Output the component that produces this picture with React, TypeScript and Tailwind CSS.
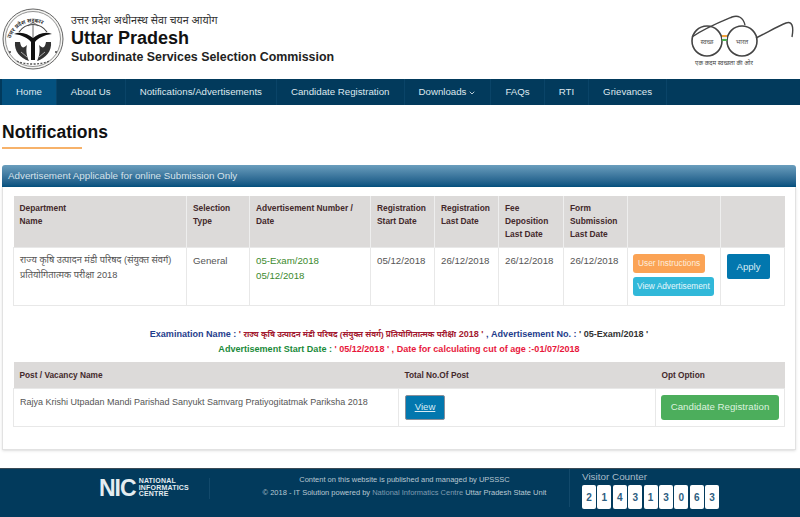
import React from "react";
import { ChevronDown } from "lucide-react";

const navItems = [
  { label: "Home", active: true },
  { label: "About Us" },
  { label: "Notifications/Advertisements" },
  { label: "Candidate Registration" },
  { label: "Downloads", caret: true },
  { label: "FAQs" },
  { label: "RTI" },
  { label: "Grievances" },
];

const counter = ["2", "1", "4", "3", "1", "3", "0", "6", "3"];

function StateEmblem() {
  return (
    <svg width="62" height="68" viewBox="0 0 62 68" className="shrink-0">
      <defs>
        <path id="emblemTop" d="M8 36 A23.5 23.5 0 0 1 54 36" />
      </defs>
      <circle cx="31" cy="34" r="30" fill="#f4f4f2" stroke="#666" strokeWidth="1" />
      <circle cx="31" cy="34" r="27.5" fill="#fff" stroke="#666" strokeWidth="0.7" />
      <text fontSize="5.6" fill="#333" fontWeight="700">
        <textPath href="#emblemTop" startOffset="4%">उत्तर प्रदेश सरकार</textPath>
      </text>
      <path d="M12 29 C20 30 26 33 29 37 L29 55 L33 55 L33 37 C36 33 42 30 50 29 C43 26 36 29 31 33 C26 29 19 26 12 29Z" fill="#111" />
      <path d="M17 27 C24 17 38 17 45 27" fill="none" stroke="#444" strokeWidth="1.2" />
      <path d="M31 17 L31 33 M26 21 L31 17 L36 21" fill="none" stroke="#555" strokeWidth="0.9" />
      <path d="M13 37 C12 46 18 53 27 56 C24 50 24 44 25 40 C21 44 19 43 18 37Z" fill="#333" />
      <path d="M49 37 C50 46 44 53 35 56 C38 50 38 44 37 40 C41 44 43 43 44 37Z" fill="#333" />
      <path d="M19 47 L25 52 M43 47 L37 52" stroke="#ddd" strokeWidth="0.7" />
      <circle cx="8" cy="47" r="1" fill="#444" />
      <circle cx="54" cy="47" r="1" fill="#444" />
      <path d="M15 56 C22 60 40 60 47 56" fill="none" stroke="#555" strokeWidth="1.4" strokeDasharray="2 1.4" />
    </svg>
  );
}

function Spectacles() {
  return (
    <svg width="106" height="54" viewBox="0 0 106 54" className="mt-[3px] shrink-0">
      <circle cx="17" cy="27" r="15" fill="none" stroke="#444" strokeWidth="1.6" />
      <circle cx="52" cy="27" r="15" fill="none" stroke="#444" strokeWidth="1.6" />
      <path d="M2 23 C15 14 30 8 42 3 C48 1 53 3 55 11" fill="none" stroke="#444" strokeWidth="1.4" />
      <path d="M66 24 C78 18 88 12 96 9 C102 7 104 12 102 23" fill="none" stroke="#444" strokeWidth="1.4" />
      <rect x="32" y="21" width="5" height="2" fill="#f2a33a" />
      <rect x="32" y="23" width="5" height="2" fill="#eee" />
      <rect x="32" y="25" width="5" height="2" fill="#4caf50" />
      <text x="17" y="30" fontSize="6.5" textAnchor="middle" fill="#555">स्वच्छ</text>
      <text x="52" y="30" fontSize="6.5" textAnchor="middle" fill="#555">भारत</text>
      <text x="34" y="51" fontSize="6" textAnchor="middle" fill="#444">एक कदम स्वच्छता की ओर</text>
    </svg>
  );
}

export default function App() {
  return (
    <div className="h-[517px] overflow-hidden bg-white font-['Liberation_Sans','Noto_Sans',sans-serif] text-[#555]">
      {/* header */}
      <div className="flex h-[79px] items-center justify-between pl-[2px] pr-[4px]">
        <div className="flex items-center gap-[7px] pb-[2px]">
          <StateEmblem />
          <div className="pt-[2px] text-black">
            <p className="text-[10.7px] leading-[12px] text-[#333]">उत्तर प्रदेश अधीनस्थ सेवा चयन आयोग</p>
            <h2 className="text-[18px] font-bold leading-[24px] text-[#111]">Uttar Pradesh</h2>
            <p className="text-[12.4px] font-bold leading-[15px] text-[#222]">Subordinate Services Selection Commission</p>
          </div>
        </div>
        <Spectacles />
      </div>

      {/* nav */}
      <div className="flex h-[26px] bg-[#023a5c] pl-[2px] text-[9.7px] text-[#dfe8ee]">
        {navItems.map((item) => (
          <a
            key={item.label}
            href="#"
            className={`flex items-center border-r border-[#0a4468] px-[14px] ${item.active ? "bg-[#04517f]" : ""}`}
          >
            {item.label}
            {item.caret && <ChevronDown size={8} strokeWidth={2.5} className="ml-[2px] mt-[1px]" />}
          </a>
        ))}
      </div>

      {/* page title */}
      <div className="pl-[2px] pt-[16px]">
        <h1 className="text-[17.5px] font-bold leading-[22px] text-[#111]">Notifications</h1>
        <div className="mt-[4px] h-[2px] w-[80px] bg-[#f7b26a]" />
      </div>

      {/* panel */}
      <div className="ml-[2px] mt-[16px] w-[794px]">
        <div className="flex h-[22px] items-center rounded-t-[3px] bg-gradient-to-b from-[#6a9ebd] to-[#03517f] pl-[6px] text-[9.8px] text-[#d5e2ea]">
          Advertisement Applicable for online Submission Only
        </div>
        <div className="h-[263px] border border-t-0 border-[#e2e2e2] px-[10px] pt-[9px] shadow-sm">
          <table className="w-[771px] table-fixed border-collapse text-[9.7px] leading-[15px]">
            <colgroup>
              <col className="w-[173px]" />
              <col className="w-[63px]" />
              <col className="w-[121px]" />
              <col className="w-[64px]" />
              <col className="w-[64px]" />
              <col className="w-[65px]" />
              <col className="w-[64px]" />
              <col className="w-[93px]" />
              <col className="w-[64px]" />
            </colgroup>
            <thead>
              <tr className="h-[51px] bg-[#dcdad9] text-[8.4px] leading-[13px] text-[#43292b]">
                <th className="border-r border-[#eee] px-[6px] pt-[6px] text-left align-top font-bold">Department<br />Name</th>
                <th className="border-r border-[#eee] px-[6px] pt-[6px] text-left align-top font-bold">Selection<br />Type</th>
                <th className="border-r border-[#eee] px-[6px] pt-[6px] text-left align-top font-bold">Advertisement Number /<br />Date</th>
                <th className="border-r border-[#eee] px-[6px] pt-[6px] text-left align-top font-bold">Registration<br />Start Date</th>
                <th className="border-r border-[#eee] px-[6px] pt-[6px] text-left align-top font-bold">Registration<br />Last Date</th>
                <th className="border-r border-[#eee] px-[6px] pt-[6px] text-left align-top font-bold">Fee<br />Deposition<br />Last Date</th>
                <th className="border-r border-[#eee] px-[6px] pt-[6px] text-left align-top font-bold">Form<br />Submission<br />Last Date</th>
                <th className="border-r border-[#eee]" />
                <th />
              </tr>
            </thead>
            <tbody>
              <tr className="h-[58px] border border-[#e8e8e8] align-top">
                <td className="border-r border-[#e8e8e8] px-[6px] pt-[5px] text-[9.25px]">राज्य कृषि उत्पादन मंडी परिषद (संयुक्त संवर्ग) प्रतियोगितात्मक परीक्षा 2018</td>
                <td className="border-r border-[#e8e8e8] px-[6px] pt-[5px]">General</td>
                <td className="border-r border-[#e8e8e8] px-[6px] pt-[5px] text-[#3c8a2e]">05-Exam/2018<br />05/12/2018</td>
                <td className="border-r border-[#e8e8e8] px-[6px] pt-[5px]">05/12/2018</td>
                <td className="border-r border-[#e8e8e8] px-[6px] pt-[5px]">26/12/2018</td>
                <td className="border-r border-[#e8e8e8] px-[6px] pt-[5px]">26/12/2018</td>
                <td className="border-r border-[#e8e8e8] px-[6px] pt-[5px]">26/12/2018</td>
                <td className="border-r border-[#e8e8e8] px-[5px] pt-[6px]">
                  <div className="flex flex-col items-start gap-[4px]">
                    <a href="#" className="flex h-[19px] items-center whitespace-nowrap rounded-[3px] bg-[#fba355] px-[5px] text-[8.3px] text-[#fdeedd]">User Instructions</a>
                    <a href="#" className="flex h-[19px] items-center whitespace-nowrap rounded-[3px] bg-[#31b8d9] px-[4px] text-[8.3px] text-[#e6f7fb]">View Advertisement</a>
                  </div>
                </td>
                <td className="px-[6px] pt-[6px]">
                  <a href="#" className="flex h-[25px] w-[43px] items-center justify-center rounded-[2px] bg-[#0277ae] text-[9.6px] text-[#d8ecf5]">Apply</a>
                </td>
              </tr>
            </tbody>
          </table>

          <div className="mt-[21px] text-center text-[9.05px] font-bold leading-[15px]">
            <p className="text-[#1f3d8c]">
              Examination Name : <span className="text-[#a31a30]">' <span className="text-[8px]">राज्य कृषि उत्पादन मंडी परिषद (संयुक्त संवर्ग) प्रतियोगितात्मक परीक्षा</span> 2018 '</span> , Advertisement No. : <span className="text-[#333]">' 05-Exam/2018 '</span>
            </p>
            <p className="text-[#1a8a3a]">
              Advertisement Start Date : <span className="text-[#e8173c]">' 05/12/2018 ' , Date for calculating cut of age :-01/07/2018</span>
            </p>
          </div>

          <table className="mt-[5px] w-[771px] table-fixed border-collapse text-[9px]">
            <colgroup>
              <col className="w-[385px]" />
              <col className="w-[257px]" />
              <col className="w-[129px]" />
            </colgroup>
            <thead>
              <tr className="h-[27px] bg-[#dcdad9] text-left text-[8.3px] text-[#43292b]">
                <th className="px-[6px] font-bold">Post / Vacancy Name</th>
                <th className="px-[6px] font-bold">Total No.Of Post</th>
                <th className="px-[6px] font-bold">Opt Option</th>
              </tr>
            </thead>
            <tbody>
              <tr className="h-[38px] border border-[#e8e8e8] align-top">
                <td className="border-r border-[#e8e8e8] px-[6px] pt-[7px]">Rajya Krishi Utpadan Mandi Parishad Sanyukt Samvarg Pratiyogitatmak Pariksha 2018</td>
                <td className="border-r border-[#e8e8e8] px-[6px] pt-[6px]">
                  <a href="#" className="flex h-[25px] w-[40px] items-center justify-center rounded-[2px] border border-[#8a8f99] bg-[#0277ae] text-[9.6px] text-[#d8ecf5] underline">View</a>
                </td>
                <td className="px-[5px] pt-[6px]">
                  <a href="#" className="flex h-[25px] w-[118px] items-center justify-center rounded-[3px] bg-[#4cae5c] text-[9.7px] text-[#dcf2df]">Candidate Registration</a>
                </td>
              </tr>
            </tbody>
          </table>
        </div>
      </div>

      {/* footer */}
      <div className="mt-[18px] flex h-[49px] border-t border-[#3a4a55] bg-[#023a5c] pt-[4px] text-[#b9c8d2]">
        <div className="ml-[99px] mt-[5px] flex h-[21px] w-[111px] items-start border-r border-[#12496b]">
          <span className="text-[23px] font-black leading-[20px] tracking-[-1px] text-[#e4ecf0]">NIC</span>
          <span className="ml-[3px] text-[7px] font-bold leading-[6.6px] tracking-[0.2px] text-[#e4ecf0]">NATIONAL<br />INFORMATICS<br />CENTRE</span>
        </div>
        <div className="w-[359px] pl-[30px] text-center text-[7.5px] leading-[13px]">
          <p>Content on this website is published and managed by UPSSSC</p>
          <p>© 2018 - IT Solution powered by <span className="text-[#7f9bb0]">National Informatics Centre</span> Uttar Pradesh State Unit</p>
        </div>
        <div className="-mt-[4px] h-[38px] border-l border-[#12496b] pl-[12px]">
          <p className="pt-[1px] text-[9.9px] leading-[13px] text-[#a9bcc9]">Visitor Counter</p>
          <div className="mt-[2px] flex gap-[1.4px]">
            {counter.map((digit, i) => (
              <span key={i} className="flex h-[24px] w-[14px] items-center justify-center rounded-[2px] bg-white text-[10px] font-bold text-[#2d5d80]">
                {digit}
              </span>
            ))}
          </div>
        </div>
      </div>
    </div>
  );
}
